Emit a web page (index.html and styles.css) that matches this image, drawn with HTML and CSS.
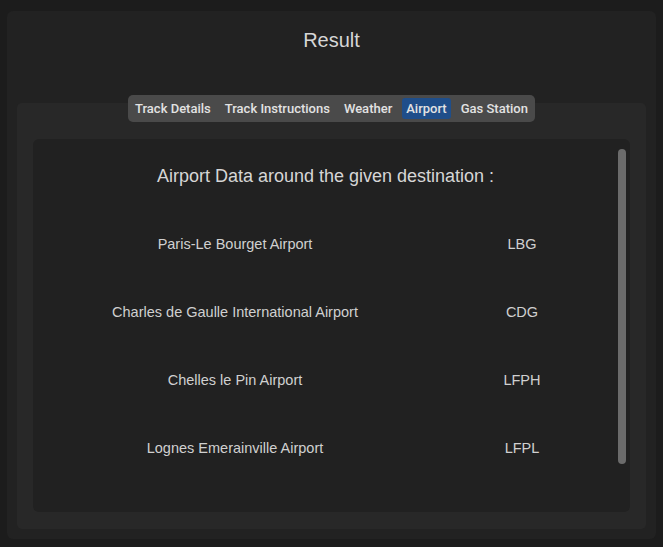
FILE: index.html
```html
<!DOCTYPE html>
<html>
<head>
<meta charset="utf-8">
<link rel="stylesheet" href="styles.css">
</head>
<body>
<div class="outer">
  <h1 class="title">Result</h1>
  <div class="panel">
    <div class="tabs">
      <span class="tab">Track Details</span>
      <span class="tab">Track Instructions</span>
      <span class="tab">Weather</span>
      <span class="tab active">Airport</span>
      <span class="tab">Gas Station</span>
    </div>
    <div class="content">
      <div class="scroll">
        <h2 class="heading">Airport Data around the given destination :</h2>
        <div class="rows">
          <div class="name">Paris-Le Bourget Airport</div><div class="code">LBG</div>
          <div class="name">Charles de Gaulle International Airport</div><div class="code">CDG</div>
          <div class="name">Chelles le Pin Airport</div><div class="code">LFPH</div>
          <div class="name">Lognes Emerainville Airport</div><div class="code">LFPL</div>
        </div>
      </div>
      <div class="scrollbar"></div>
    </div>
  </div>
</div>
</body>
</html>
```
FILE: styles.css
```css
html, body { margin: 0; padding: 0; }
body {
  background: #1c1c1c;
  width: 663px;
  height: 547px;
  font-family: "Liberation Sans", Arial, sans-serif;
  color: #d9d9d9;
  padding: 11px 0 0 7px;
  box-sizing: border-box;
}
.outer {
  width: 649px;
  height: 528px;
  background: #222222;
  border-radius: 6px;
  box-sizing: border-box;
  padding: 17px 10px 0 10px;
  display: flex;
  flex-direction: column;
}
.title {
  margin: 0;
  font-weight: normal;
  font-size: 20px;
  line-height: 24px;
  text-align: center;
  color: #d6d6d6;
}
.panel {
  margin-top: 51px;
  height: 426px;
  background: #282828;
  border-radius: 5px;
  padding: 0 16px;
  display: flex;
  flex-direction: column;
  align-items: stretch;
}
.tabs {
  align-self: center;
  margin-top: -8px;
  display: flex;
  gap: 6px;
  padding: 3px;
  background: #4a4a4a;
  border-radius: 5px;
  font-family: Roboto, "Liberation Sans", sans-serif;
  font-weight: 500;
  font-size: 13px;
  color: #e2e2e2;
}
.tab {
  padding: 0 4px;
  height: 21px;
  line-height: 21px;
  border-radius: 3px;
}
.tab.active { background: #1f4e8a; }
.content {
  margin-top: 17px;
  height: 373px;
  background: #212121;
  border-radius: 6px;
  display: flex;
  padding: 10px 4px 0 0;
  box-sizing: border-box;
}
.scroll {
  flex: 1;
  display: flex;
  flex-direction: column;
}
.heading {
  margin: 15px 0 0 0;
  font-weight: normal;
  font-size: 18px;
  line-height: 24px;
  text-align: center;
  color: #d6d6d6;
}
.rows {
  margin-top: 47px;
  display: grid;
  grid-template-columns: 404px 170px;
  row-gap: 50px;
  font-size: 14.5px;
  line-height: 18px;
  color: #d0d0d0;
}
.name, .code { text-align: center; }
.scrollbar {
  width: 8px;
  height: 315px;
  background: #6b6b6b;
  border-radius: 4px;
}
```
